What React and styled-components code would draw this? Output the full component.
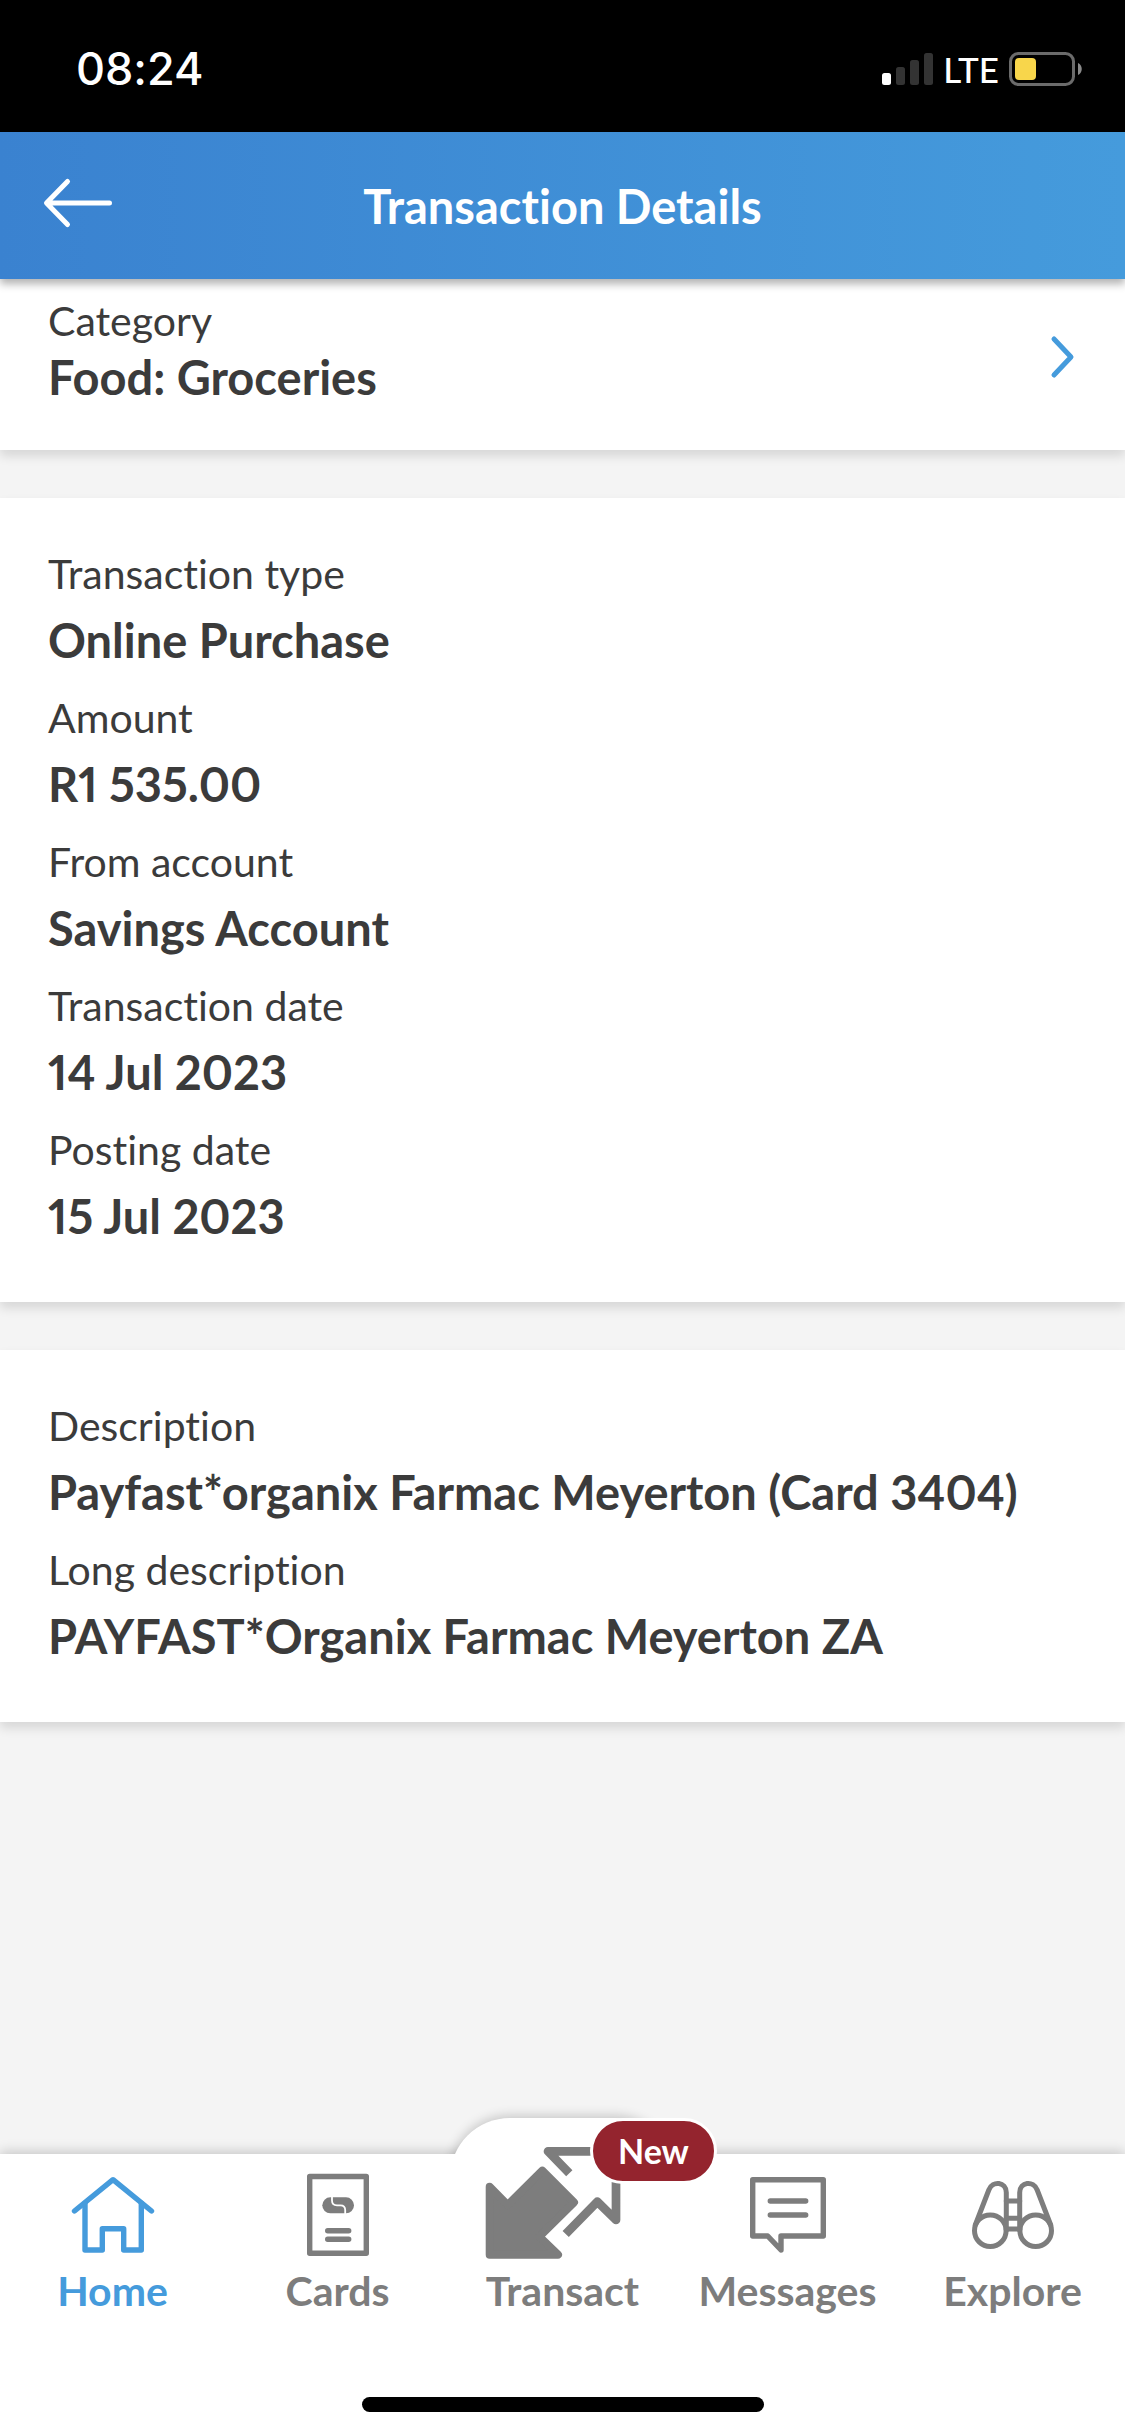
import React from "react";
import styled, { createGlobalStyle } from "styled-components";

const GlobalStyle = createGlobalStyle`
  * {
    box-sizing: border-box;
  }

  body {
    margin: 0;
    background-color: #f4f4f4;
    color: #3b3b3b;
    font-family: Lato, "Open Sans", sans-serif;
    font-variant-ligatures: none;
    font-variant-numeric: proportional-nums;
  }
`;

const Page = styled.div`
  min-height: 100vh;

  display: flex;
  flex-direction: column;
`;

const StatusBar = styled.div`
  height: 132px;
  padding: 6px 43px 0 76px;

  display: flex;
  align-items: center;
  justify-content: space-between;

  background-color: #000;
  color: #fff;
`;

const Time = styled.time`
  font-family: Inter, sans-serif;
  font-size: 45px;
  font-weight: 500;
  line-height: 54px;
`;

const StatusIcons = styled.div`
  display: flex;
  align-items: center;
  gap: 10px;
`;

const Network = styled.span`
  font-size: 35px;
  font-weight: 500;
  line-height: 40px;
`;

const Header = styled.header`
  height: 147px;
  padding: 0 40px;

  display: grid;
  grid-template-columns: 1fr auto 1fr;
  align-items: center;

  position: relative;
  z-index: 1;

  background: linear-gradient(90deg, #3a82d0, #459bdc);
  box-shadow: 0 5px 8px rgba(0, 0, 0, 0.3);
  color: #fff;
`;

const BackButton = styled.button`
  padding: 0 0 6px;
  border: 0;

  display: flex;
  justify-self: start;

  background-color: transparent;
  color: inherit;
`;

const Title = styled.h1`
  margin: 0;

  font-size: 47px;
  font-weight: 700;
  line-height: 56px;
`;

const Main = styled.main`
  padding-bottom: 48px;

  display: flex;
  flex-direction: column;
  gap: 48px;
`;

const Card = styled.section`
  background-color: #fff;
  box-shadow: 0 6px 10px rgba(0, 0, 0, 0.12);
`;

const CategoryLink = styled.a`
  padding: 14px 48px 29px;

  display: flex;
  align-items: center;
  justify-content: space-between;

  color: inherit;
  text-decoration: none;
`;

const CategoryText = styled.div`
  padding-bottom: 16px;

  display: flex;
  flex-direction: column;
`;

const FieldList = styled.dl`
  margin: 0;
  padding: 43px 48px 53px;

  display: flex;
  flex-direction: column;
  gap: 12px;
`;

const Label = styled.dt`
  font-size: 41px;
  line-height: ${({ $tight }) => ($tight ? "56px" : "66px")};
`;

const Value = styled.dd`
  margin: 0;

  font-size: 47px;
  font-weight: 700;
  line-height: ${({ $tight }) => ($tight ? "56px" : "66px")};
`;

const TabBar = styled.nav`
  margin-top: auto;
  padding-bottom: 24px;

  background-color: #fff;
  box-shadow: 0 -2px 12px rgba(0, 0, 0, 0.2);
`;

const Tabs = styled.div`
  display: grid;
  grid-template-columns: repeat(5, 1fr);
`;

const Tab = styled.a`
  padding: 20px 0 82px;

  display: flex;
  flex-direction: column;
  align-items: center;
  gap: 11px;

  position: relative;

  color: ${({ $active }) => ($active ? "#459bdc" : "#7d7d7d")};
  font-size: 41px;
  font-weight: 700;
  line-height: 48px;
  text-decoration: none;

  svg {
    position: relative;
    overflow: visible;
  }
`;

/* only the part above the bar shows, the rest is clipped off */
const Bump = styled.span`
  height: 60px;

  position: absolute;
  top: -36px;
  left: 0;
  right: 0;

  border-radius: 60px 60px 0 0;
  background-color: #fff;
  box-shadow: 0 -2px 12px rgba(0, 0, 0, 0.2);
  clip-path: inset(-30px -30px 24px -30px);
`;

const Badge = styled.span`
  padding: 6px 25px;

  position: absolute;
  top: -36px;
  left: 140px;

  border: 3px solid #fff;
  border-radius: 33px;
  background-color: #94242e;
  color: #fff;
  font-size: 34px;
`;

const HomeIndicator = styled.div`
  width: 402px;
  height: 15px;
  margin: 0 auto;

  border-radius: 8px;
  background-color: #000;
`;

const SignalIcon = () => (
  <svg width="51" height="34" viewBox="0 0 51 34" aria-hidden="true">
    <rect x="0" y="21" width="9" height="12" rx="2.5" fill="#fff" />
    <rect x="14" y="15" width="9" height="18" rx="2.5" fill="#333" />
    <rect x="28" y="8" width="9" height="25" rx="2.5" fill="#333" />
    <rect x="42" y="1" width="9" height="32" rx="2.5" fill="#333" />
  </svg>
);

const BatteryIcon = () => (
  <svg width="73" height="34" viewBox="0 0 73 34" aria-hidden="true">
    <rect
      x="1.5"
      y="1.5"
      width="63"
      height="31"
      rx="8"
      fill="none"
      stroke="#6b6b6b"
      strokeWidth="3"
    />
    <rect x="6" y="6" width="21" height="22" rx="4" fill="#f8d64b" />
    <path d="M69 11c5 2 5 10 0 12z" fill="#8a8a8a" />
  </svg>
);

const BackIcon = () => (
  <svg
    width="76"
    height="52"
    viewBox="0 0 76 52"
    fill="none"
    stroke="currentColor"
    strokeWidth="5"
    strokeLinecap="round"
    strokeLinejoin="round"
    aria-hidden="true"
  >
    <path d="M27.500 4.500L6.500 26L27.500 47.500M7 26H69.500" />
  </svg>
);

const ChevronIcon = () => (
  <svg
    width="28"
    height="44"
    viewBox="0 0 28 44"
    fill="none"
    stroke="#459bdc"
    strokeWidth="5"
    strokeLinecap="round"
    strokeLinejoin="round"
    aria-hidden="true"
  >
    <path d="M5 4L22 22L5 40" />
  </svg>
);

const TabIcon = ({ width, children }) => (
  <svg
    width={width}
    height="82"
    viewBox={`0 0 ${width} 82`}
    fill="none"
    stroke="currentColor"
    strokeWidth="5.4"
    strokeLinecap="round"
    strokeLinejoin="round"
    aria-hidden="true"
  >
    {children}
  </svg>
);

const HomeIcon = () => (
  <TabIcon width={84}>
    <path d="M3.500 37L42 5.700L80.500 37" />
    <path d="M14 29.300V76H31.300V54.700H52.700V76H70.300V29.300" />
  </TabIcon>
);

const CardsIcon = () => (
  <TabIcon width={64}>
    <rect x="3.700" y="2.500" width="56.600" height="76.800" />
    <path d="M21.700 56.700H42.700M21.700 65.300H42.700" />
    <rect
      x="16.300"
      y="23.300"
      width="31.700"
      height="16"
      rx="8"
      fill="currentColor"
      stroke="none"
    />
    <path
      d="M26 22.500V26.500Q26 31.300 31 31.300H34.500Q39.200 31.300 39.200 36V40.200"
      stroke="#fff"
      strokeWidth="1.800"
      strokeLinecap="butt"
    />
  </TabIcon>
);

const TransactIcon = () => (
  <TabIcon width={156}>
    <path
      d="M4.700 12.700L22.700 31L57.300 -3.300L89 28.300L54.300 62.700L73 80.700H4.700Z"
      fill="currentColor"
      strokeWidth="8"
    />
    <path
      d="M84.300 -0.700L63 -22.700H131V46L112.300 27.700L80.700 60"
      strokeWidth="8.700"
      strokeLinecap="butt"
    />
  </TabIcon>
);

const MessagesIcon = () => (
  <TabIcon width={78}>
    <path d="M3.700 5.700H74.300V62H32V76L18.700 62H3.700Z" />
    <path d="M21.300 27H56.700M21.300 41H56.700" />
  </TabIcon>
);

const ExploreIcon = () => (
  <TabIcon width={84}>
    <g strokeWidth="5">
      <circle cx="19.300" cy="56.700" r="15.800" />
      <circle cx="64.700" cy="56.700" r="15.800" />
      <path d="M4.300 51L17.800 16C21.500 6 35.300 8 35.300 18.500V56" />
      <path d="M79.700 51L66.200 16C62.500 6 48.700 8 48.700 18.500V56" />
      <path d="M35.300 27H48.700M35.300 44.300H48.700M35.300 55H48.700" />
    </g>
  </TabIcon>
);

const transaction = [
  { label: "Transaction type", value: "Online Purchase" },
  { label: "Amount", value: "R1 535.00" },
  { label: "From account", value: "Savings Account" },
  { label: "Transaction date", value: "14 Jul 2023" },
  { label: "Posting date", value: "15 Jul 2023" },
];

const description = [
  {
    label: "Description",
    value: "Payfast*organix Farmac Meyerton (Card 3404)",
  },
  { label: "Long description", value: "PAYFAST*Organix Farmac Meyerton ZA" },
];

const tabs = [
  { name: "Home", Icon: HomeIcon, active: true },
  { name: "Cards", Icon: CardsIcon },
  { name: "Transact", Icon: TransactIcon, badge: "New" },
  { name: "Messages", Icon: MessagesIcon },
  { name: "Explore", Icon: ExploreIcon },
];

function Fields({ items }) {
  return (
    <Card>
      <FieldList>
        {items.map((item) => (
          <div key={item.label}>
            <Label>{item.label}</Label>
            <Value>{item.value}</Value>
          </div>
        ))}
      </FieldList>
    </Card>
  );
}

export default function App() {
  return (
    <Page>
      <GlobalStyle />
      <StatusBar>
        <Time>08:24</Time>
        <StatusIcons>
          <SignalIcon />
          <Network>LTE</Network>
          <BatteryIcon />
        </StatusIcons>
      </StatusBar>

      <Header>
        <BackButton type="button" aria-label="Back">
          <BackIcon />
        </BackButton>
        <Title>Transaction Details</Title>
      </Header>

      <Main>
        <Card>
          <CategoryLink href="#category">
            <CategoryText>
              <Label as="span" $tight>
                Category
              </Label>
              <Value as="strong" $tight>
                Food: Groceries
              </Value>
            </CategoryText>
            <ChevronIcon />
          </CategoryLink>
        </Card>
        <Fields items={transaction} />
        <Fields items={description} />
      </Main>

      <TabBar>
        <Tabs>
          {tabs.map(({ name, Icon, active, badge }) => (
            <Tab
              key={name}
              href={"#" + name.toLowerCase()}
              $active={active}
              aria-current={active ? "page" : undefined}
            >
              {badge && <Bump />}
              <Icon />
              {name}
              {badge && <Badge>{badge}</Badge>}
            </Tab>
          ))}
        </Tabs>
        <HomeIndicator />
      </TabBar>
    </Page>
  );
}
